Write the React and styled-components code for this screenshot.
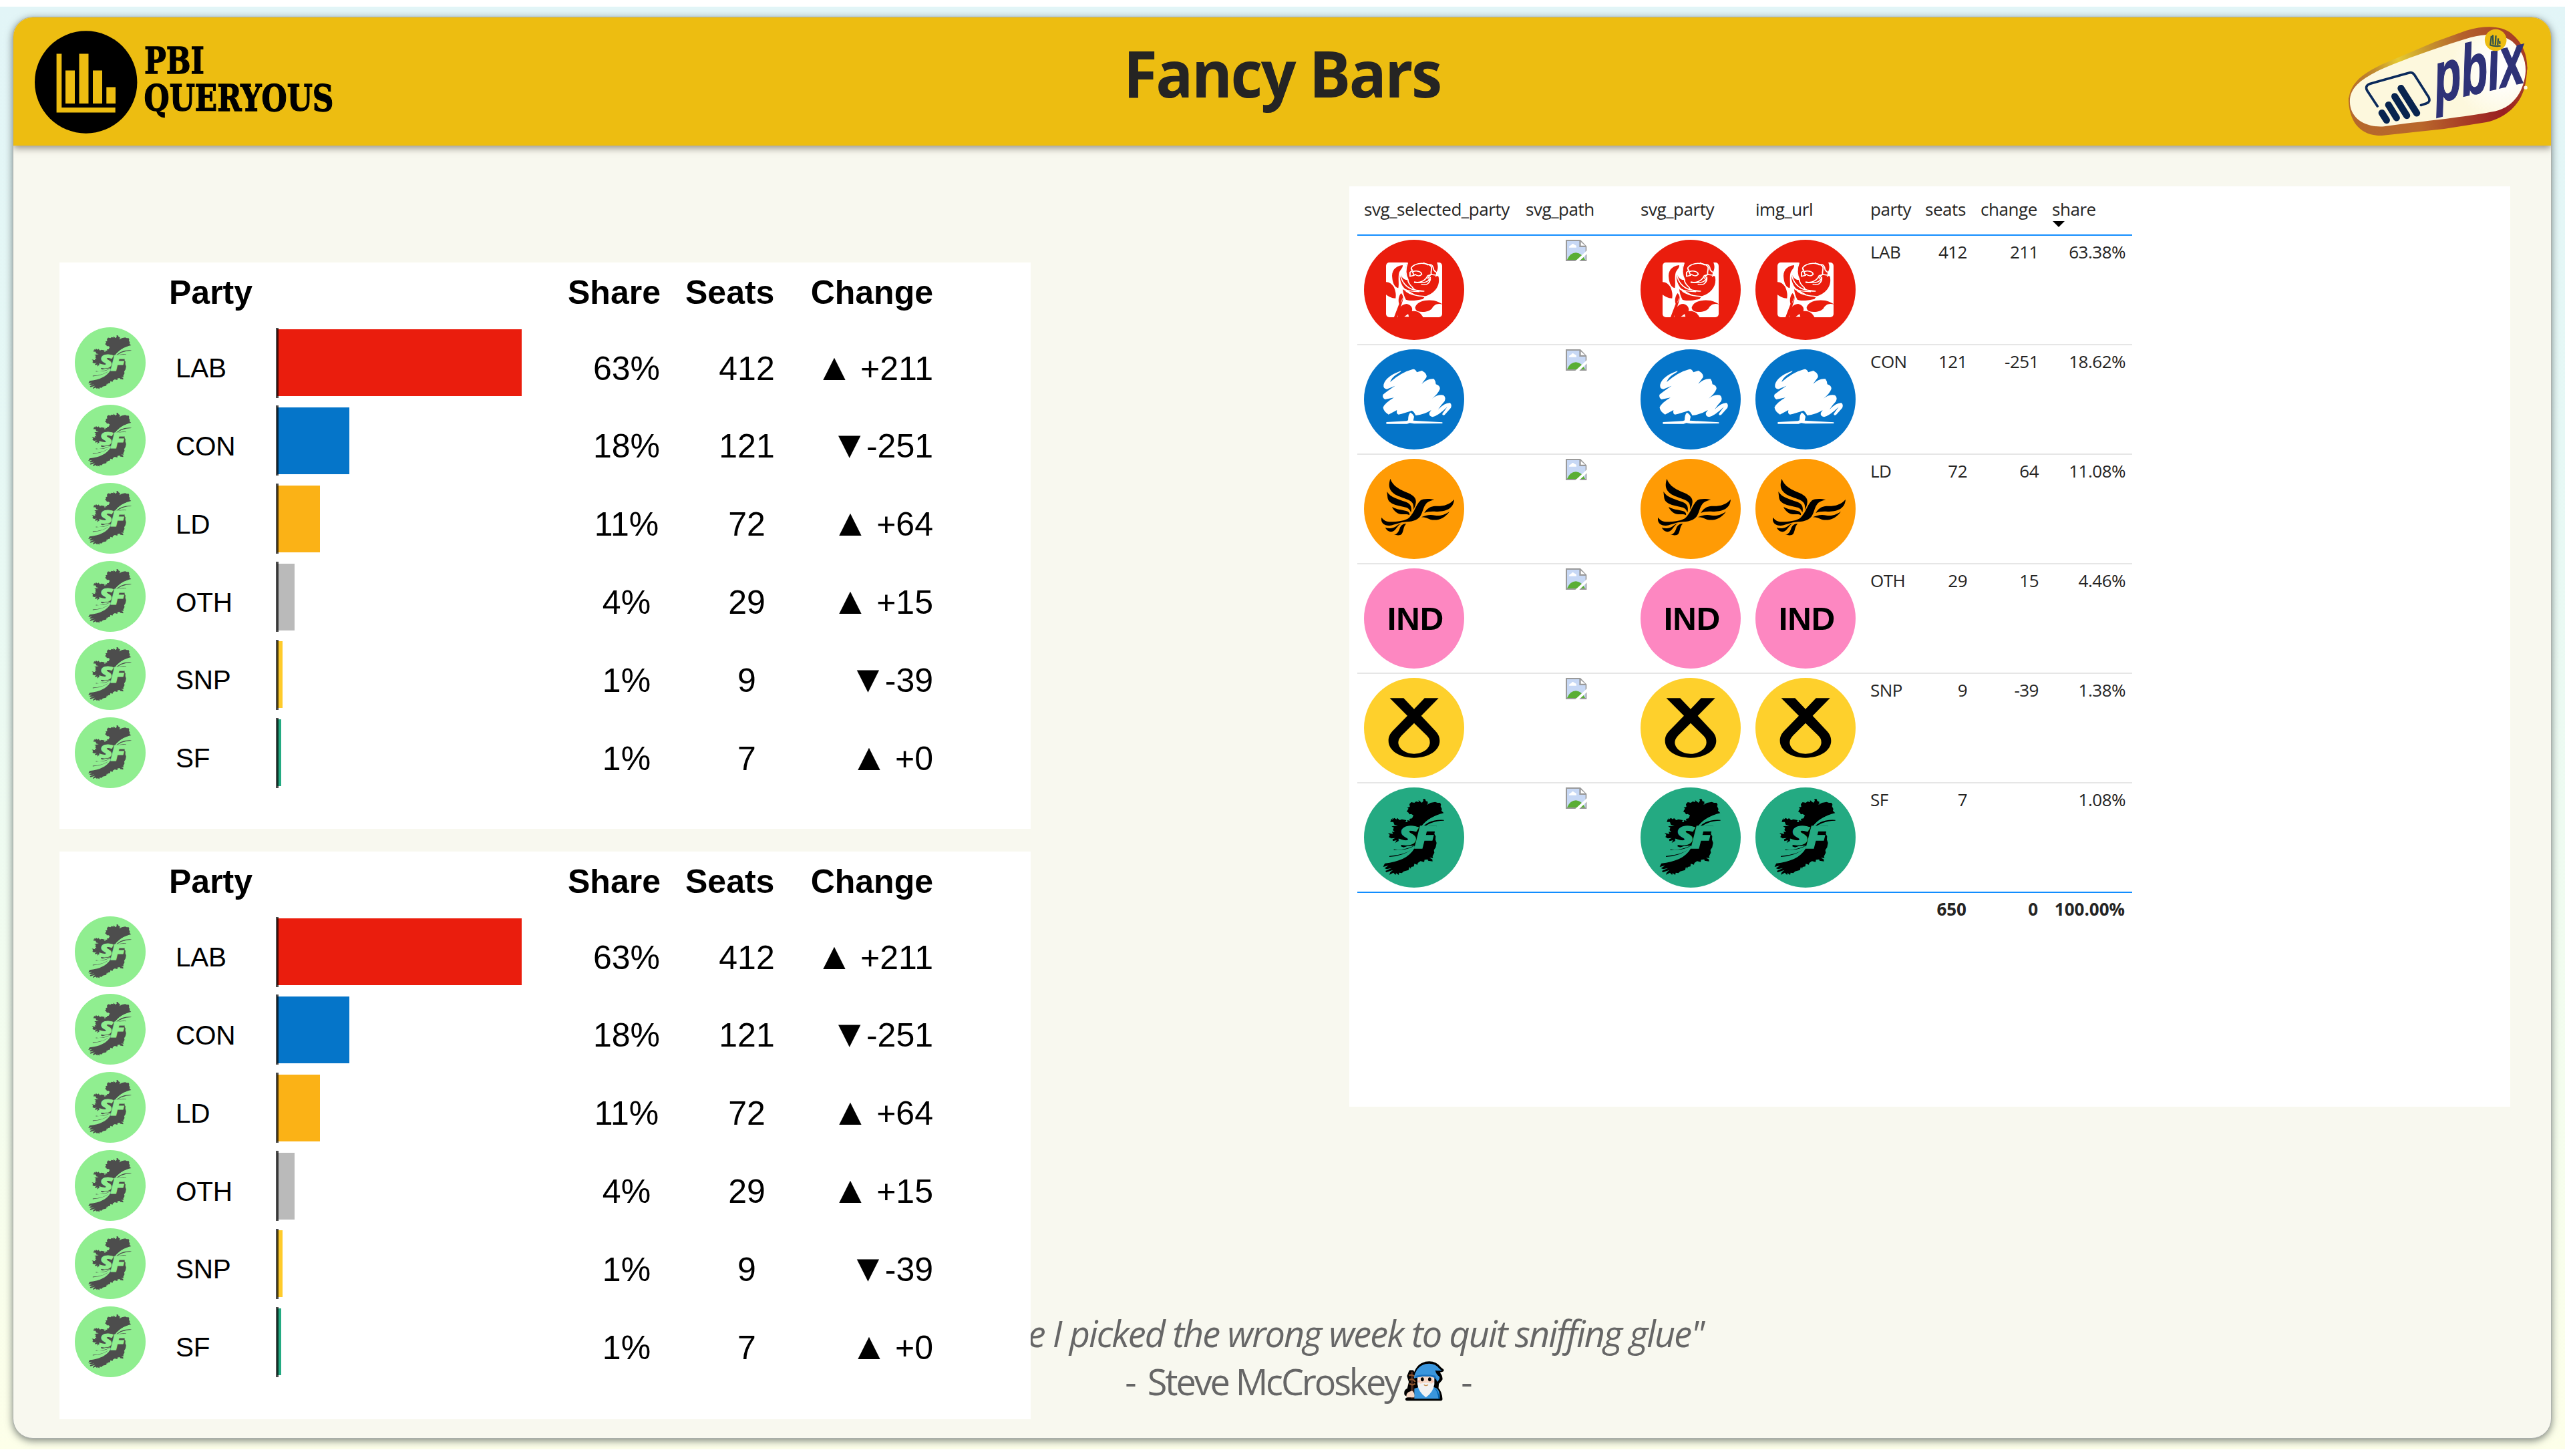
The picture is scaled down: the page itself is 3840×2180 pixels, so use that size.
import React from "react";
import styled, { createGlobalStyle, css } from "styled-components";

const Global = createGlobalStyle`
  * { box-sizing: border-box; }
  html, body { margin: 0; padding: 0; background: #fff; overflow: hidden; }
`;

const UI = `"Open Sans", "Noto Sans", sans-serif`;
const CHART = `"Liberation Sans", Arial, sans-serif`;

const Page = styled.div`
  width: 3840px;
  height: 2180px;
  padding: 10px 0;
  background: #fff;
`;
const Canvas = styled.div`
  height: 2160px;
  padding: 15px 20px 16px 19px;
  background: linear-gradient(180deg, #e2f5f7 0%, #e6f8f5 30%, #f4fdee 75%, #fdffe9 100%);
`;
const Card = styled.main`
  height: 2129px;
  display: flex;
  flex-direction: column;
  border: 1px solid #a9aeab;
  border-radius: 30px;
  background: #f8f8ef;
  box-shadow: 0 3px 12px rgba(40, 50, 50, 0.6);
  overflow: hidden;
`;
const Header = styled.header`
  flex: none;
  height: 192px;
  display: grid;
  grid-template-columns: 1fr auto 1fr;
  align-items: start;
  padding: 0 20px;
  background: #edbd11;
  box-shadow: 0 4px 10px rgba(60, 50, 40, 0.5);
`;
const Brand = styled.svg`
  display: block;
  width: 460px;
  height: 154px;
  margin: 20px 0 0 12px;
  overflow: visible;
`;
const Title = styled.h1`
  margin: 18px 0 0;
  font: 700 96px/130px ${UI};
  letter-spacing: -2.6px;
  color: #252423;
  transform: scaleX(0.968);
`;
const Badge = styled.svg`
  display: block;
  justify-self: end;
  width: 290px;
  height: 173px;
  margin-top: 9px;
  overflow: visible;
`;
const Body = styled.div`
  flex: 1;
  display: grid;
  grid-template: 1fr / 1fr;
`;
const Panels = styled.div`
  grid-area: 1 / 1;
  z-index: 1;
  display: flex;
  align-items: flex-start;
  justify-content: space-between;
  padding: 61px 61px 0 69px;
`;
const Charts = styled.div`
  display: grid;
  gap: 34px;
  padding-top: 114px;
`;

/* ---- party chart ---- */
const Chart = styled.section`
  width: 1454px;
  height: 848px;
  padding: 16px 0 0 23px;
  background: #fff;
  color: #000;
  font-family: ${CHART};

  &:last-child {
    height: 850px;
  }
`;
const chartGrid = css`
  display: grid;
  grid-template-columns: 151px 150px 408px 234px 126px 216px;
`;
const ChartHead = styled.div`
  ${chartGrid}
  height: 80.7px;
  font-size: 50px;
  font-weight: 700;
  line-height: 58px;
`;
const HeadCell = styled.span`
  grid-column: ${(p) => p.$col};
  text-align: ${(p) => p.$align || "left"};
  margin-left: ${(p) => p.$shift || 0}px;
  white-space: nowrap;
`;
const ChartRow = styled.div`
  ${chartGrid}
  height: 116.8px;
`;
const RowIcon = styled.svg`
  display: block;
  width: 106px;
  height: 106px;
`;
const Label = styled.span`
  padding-top: 38.5px;
  font-size: 40.5px;
  line-height: 46px;
  letter-spacing: -0.3px;
`;
const Track = styled.div`
  display: flex;
  align-items: center;
  height: 105px;
  margin-top: 1px;
`;
const Axis = styled.i`
  z-index: 1;
  width: 4px;
  height: 105px;
  margin-right: -2px;
  background: rgba(0, 0, 0, 0.7);
`;
const Bar = styled.i`
  height: 100px;
  background: ${(p) => p.$color};
`;
const Figure = styled.span`
  padding-top: 33px;
  font-size: 50px;
  line-height: 58px;
  text-align: ${(p) => p.$align};
  white-space: pre;
`;
const Arrow = styled.span`
  margin-right: -3px;
  font-size: 57px;
  line-height: 50px;
`;

/* ---- table ---- */
const TablePanel = styled.section`
  width: 1738px;
  height: 1378px;
  padding: 0 0 0 12px;
  background: #fff;
  font-family: ${UI};
  font-size: 26px;
  color: #252423;
`;
const tableGrid = css`
  display: grid;
  width: 1160px;
  grid-template-columns: 242px 172px 172px 172px 82px 83px 107px 130px;
`;
const THead = styled.div`
  ${tableGrid}
  height: 74px;
  border-bottom: 2px solid #118dff;
`;
const Th = styled.span`
  position: relative;
  padding: 16px 0 0 10px;
  line-height: 36px;
  letter-spacing: -0.45px;
  white-space: nowrap;
`;
const SortMark = styled.i`
  position: absolute;
  left: 11px;
  top: 52px;
  border: solid transparent;
  border-width: 9px 9px 0;
  border-top-color: #000;
`;
const TRow = styled.div`
  ${tableGrid}
  height: 164px;
  border-bottom: 2px solid ${(p) => (p.$last ? "#118dff" : "#e6e6e6")};
`;
const TotalRow = styled.div`
  ${tableGrid}
  font-weight: 700;
`;
const Cell = styled.div`
  padding: 6px 10px 0;
`;
const Value = styled(Cell)`
  grid-column: ${(p) => p.$col};
  padding-top: 6px;
  line-height: 36px;
  text-align: ${(p) => (p.$col > 5 ? "right" : "left")};
  letter-spacing: -0.5px;
`;
const TotalValue = styled(Value)`
  padding-top: 6px;
  padding-right: 11px;
  letter-spacing: 0;
`;
const Emblem = styled.svg`
  display: block;
  width: 150px;
  height: 150px;
`;
const Missing = styled.svg`
  display: block;
  width: 32px;
  height: 32px;
  margin: 0 auto;
`;

/* ---- quote ---- */
const Quote = styled.footer`
  grid-area: 1 / 1;
  align-self: end;
  display: flex;
  flex-direction: column;
  align-items: center;
  padding: 0 0 49px 50px;
  font: 400 54px/72px ${UI};
  color: #666;
`;
const Saying = styled.p`
  margin: 0;
  padding-right: 6px;
  font-style: italic;
  letter-spacing: -1.9px;
  white-space: nowrap;
`;
const Author = styled.p`
  margin: 0;
  display: flex;
  align-items: center;
  gap: 16px;
`;
const Name = styled.span`
  letter-spacing: -3.1px;
`;
const Wizard = styled.svg`
  width: 62px;
  height: 62px;
  margin: 0 9px 0 -12px;
`;

/* ---- drawings ---- */
function Ireland({ ground }) {
  return (
    <>
      <path d="M228,645 L236,632 230,628 242,624 240,612 248,603 262,606 270,600 282,603 281,594 296,606 303,597 300,590 310,588 314,598 324,602 319,609 326,606 318,616 335,606 356,602 366,606 378,606 382,614 380,622 386,634 384,642 394,652 C350,662 305,690 288,728 L284,742 350,726 354,736 352,746 358,756 357,772 362,786 358,806 350,818 352,830 344,846 346,854 330,853 343,860 344,869 324,866 322,860 308,862 306,872 290,868 278,876 276,884 262,880 260,892 248,894 246,902 240,894 236,908 214,914 206,922 194,920 192,930 180,922 178,930 168,920 150,929 154,918 166,908 136,918 132,912 160,899 138,904 128,900 146,888 122,894 126,885 130,878 C190,872 240,852 264,808 L262,798 232,800 214,806 202,802 204,792 192,788 198,780 190,778 176,786 182,774 166,778 164,770 176,764 158,766 148,760 152,750 144,742 166,746 162,736 174,738 166,728 170,718 160,712 188,708 172,704 168,692 154,692 158,680 166,674 160,684 172,674 182,680 186,674 196,684 206,680 226,684 222,692 232,692 230,684 242,686 240,678 252,676 258,662 248,656 240,658 236,650 Z" />
      <path d="M395,683 Q320,678 286,732 Q330,686 395,686Z M362,709 Q310,702 288,734 Q320,708 362,712Z M170,815 Q230,824 266,796 Q235,816 170,819Z M150,845 Q230,840 267,802 Q225,844 150,849Z" />
      <g fill="none" stroke={ground} strokeWidth="3">
        <path d="M384,660 Q318,672 286,728" strokeWidth="5" />
        <path d="M262,802 Q240,838 190,856" strokeWidth="4" />
      </g>
      <g fill={ground} stroke={ground} strokeWidth="4" fontFamily="Open Sans, Noto Sans, sans-serif" fontStyle="italic" fontWeight="800">
        <text x="191" y="796" fontSize="116" textLength="87" lengthAdjust="spacingAndGlyphs">S</text>
        <text x="262" y="811" fontSize="136" textLength="95" lengthAdjust="spacingAndGlyphs">F</text>
      </g>
    </>
  );
}

const emblems = {
  LAB: {
    box: "78 267 368 450",
    color: "#ea1d0d",
    art: (
      <>
        <rect x="159" y="369" width="206" height="246" rx="12" ry="15" fill="#fff" />
        <g fill="#ea1d0d">
          <path d="M220,381 C190,385 178,410 182,440 C184,465 192,480 204,484 C208,465 202,440 207,415 C212,400 222,392 220,381Z" />
          <path d="M238,367 L345,367 C352,385 350,402 343,416 L340,436 C344,428 350,428 352,434 C358,470 342,505 304,520 C270,526 250,500 228,487 C214,470 207,440 211,420 C218,440 228,450 240,447 L237,440 C226,415 230,385 238,367Z" />
          <path d="M220,488 C240,508 265,516 300,524 L295,533 C265,542 243,542 232,536 C225,520 222,505 220,488Z" />
          <path d="M158,457 C170,456 180,465 188,480 C195,500 196,515 194,530 C180,530 165,520 158,512Z" />
          <path d="M214,507 C205,520 203,540 207,555 L188,616 L200,616 L219,545 C224,530 222,515 214,507Z" />
          <path d="M202,616 C200,580 215,555 235,555 C252,560 258,575 254,588 C275,583 290,600 295,616Z" />
          <path d="M266,570 C275,540 310,535 335,540 C350,545 360,552 367,557 C345,550 335,560 328,575 C318,590 295,595 275,588 C268,583 266,578 266,570Z" />
        </g>
        <g fill="none" stroke="#fff" strokeWidth="4.5" strokeLinejoin="round">
          <path d="M238,370 C230,395 228,420 240,447 L214,412" />
          <path d="M211,420 C214,455 235,485 262,492 L298,498 C262,498 258,486 256,480 C246,470 238,455 240,447" />
          <path d="M222,488 C240,498 258,500 282,500 M232,498 C250,515 275,520 300,521" />
          <path d="M268,378 C250,388 248,398 256,404 L247,413 V431 L262,427 L256,411 C270,404 288,408 290,422 C282,432 272,430 264,421" />
          <path d="M268,378 C290,366 322,376 326,390 C328,402 322,410 325,422 C318,428 314,434 312,442 M262,456 C285,464 305,448 312,428 L322,424" />
          <path d="M262,459 L296,460 C312,456 320,446 322,434 M288,466 C304,474 320,466 322,440" />
          <path d="M296,370 L312,380 C330,372 332,390 334,402 C340,412 346,416 348,412 M322,422 L342,426" />
          <path d="M214,548 L220,530" strokeWidth="2" />
        </g>
        <path d="M226,613 L240,600 243,613Z" fill="#fff" />
      </>
    ),
  },
  CON: {
    box: "78 759 368 450",
    color: "#0575c9",
    art: (
      <g fill="#fff">
        <path d="M256,849 Q266,845 272,862 L291,855 Q312,870 307,886 L290,914 Q312,888 335,892 Q342,903 342,916 Q358,922 357,937 Q350,960 328,980 Q350,960 370,965 Q380,975 374,992 Q360,1010 350,1030 Q375,998 394,1000 Q402,1008 397,1022 L374,1054 Q364,1058 366,1048 L384,1018 Q350,1058 330,1063 Q316,1060 318,1045 L325,1032 Q300,1052 268,1056 Q262,1040 254,1034 Q225,1046 205,1052 Q196,1050 199,1032 L168,1052 Q150,1038 148,1020 Q155,1000 188,976 L155,984 Q144,975 148,962 Q165,945 192,923 L162,938 Q148,936 150,918 Q158,880 214,856 Q216,859 200,870 Q180,885 174,906 Q215,862 256,849 Z" />
        <path d="M240,1078 Q240,1050 249,1043 Q260,1052 262,1062 L259,1079 L366,1087 V1092 L262,1093 L246,1090 L236,1094 H160 V1086 L234,1081Z" />
      </g>
    ),
  },
  LD: {
    box: "36 21 450 450",
    color: "#ff9b05",
    art: (
      <>
        <path d="M352,204 C330,199 300,199 290,208 C270,226 262,262 240,284 C225,298 190,304 150,304 C130,302 120,292 115,284 C110,304 122,322 150,321 C180,316 195,306 215,305 C250,304 275,298 288,280 C300,262 302,235 318,219 C328,210 340,209 352,204Z" />
        <path d="M154,110 C165,145 200,160 235,175 C262,188 271,200 269,217 C268,232 262,240 258,250 C260,232 258,220 245,211 C215,192 160,190 150,148 C148,135 150,125 154,110Z" />
        <path d="M139,168 C155,195 190,202 222,214 C247,224 252,238 247,262 C240,246 235,241 215,237 C180,230 145,222 142,195 Z" />
        <path d="M162,237 C180,248 205,250 225,255 C238,258 242,265 240,274 C232,268 222,270 205,270 C185,268 170,255 162,237Z" />
        <path d="M441,203 C420,228 390,235 355,233 C330,236 318,245 307,264 C320,258 340,256 360,258 C395,258 438,250 441,203Z" />
        <path d="M420,258 C395,275 375,278 355,275 C330,270 312,275 294,283 C310,283 320,288 335,294 C365,300 395,292 420,258Z" />
        <path d="M203,311 C190,313 178,330 160,332 C148,334 138,332 131,330 C140,345 150,350 162,348 C180,344 183,322 203,311Z" />
        <path d="M226,312 C210,312 200,322 196,335 C190,350 185,360 170,361 C185,366 200,366 206,358 C216,340 212,325 226,312Z" />
      </>
    ),
  },
  OTH: {
    box: "36 513 450 450",
    color: "#fd87c1",
    art: (
      <text x="267" y="789" textAnchor="middle" fontFamily="Liberation Sans, Arial, sans-serif" fontWeight="700" fontSize="147" textLength="254" lengthAdjust="spacingAndGlyphs">
        IND
      </text>
    ),
  },
  SNP: {
    box: "36 45 450 450",
    color: "#fed02c",
    art: (
      <path
        fillRule="evenodd"
        d="M152,136 L214,136 L261,185 L308,136 L371,136 L293,215 L355,281 C370,297 376,310 376,328 C376,372 325,404 261,404 C197,404 146,372 146,328 C146,310 152,296 168,280 L231,215 Z M261,248 L205,304 C194,316 190,326 190,336 C192,366 226,386 261,386 C296,386 330,366 332,336 C332,322 328,314 318,304 Z"
      />
    ),
  },
  SF: { box: "36 537 450 450", color: "#24aa82", art: <Ireland ground="#24aa82" /> },
};

function PartyEmblem({ code }) {
  const { box, color, art } = emblems[code];
  const [x, y, w, h] = box.split(" ").map(Number);
  return (
    <Emblem viewBox={box} preserveAspectRatio="none">
      <ellipse cx={x + w / 2} cy={y + h / 2} rx={w / 2} ry={h / 2} fill={color} />
      {art}
    </Emblem>
  );
}

function MissingImage() {
  return (
    <Missing viewBox="942 45 96 96">
      <path d="M942,45 H1008 L1036,74 V141 H942Z" fill="#9a9a9a" />
      <path d="M948,51 H1003 V78 H1031 V135 H948Z" fill="#c7d8f5" />
      <path d="M1010,55 V71 H1029Z" fill="#fff" />
      <path d="M957,80 Q957,71 966,70 Q972,58 980,67 Q992,70 990,80Z" fill="#fff" />
      <path d="M948,135 Q962,103 988,103 Q1014,105 1029,135Z" fill="#5aae35" />
      <path d="M984,142 L1038,92 V108 L1002,142Z" fill="#fff" />
    </Missing>
  );
}

function BrandLogo() {
  return (
    <Brand viewBox="52 45.5 460 154">
      <circle cx="128.7" cy="122.5" r="76.7" />
      <path
        fill="#edbd11"
        d="M84.6,80 H92.3 V160.5 H172.7 V168 H84.6Z M98,105 H112 V154.5 H98Z M118.5,80 H132.5 V154.5 H118.5Z M139,105 H153 V154.5 H139Z M159.3,130 H173 V154.5 H159.3Z"
      />
      <g fontFamily="DejaVu Serif, serif" fontWeight="700" fontSize="55" stroke="#000" strokeWidth="1.4">
        <text x="216" y="109.5" textLength="90" lengthAdjust="spacingAndGlyphs">PBI</text>
        <text x="215.5" y="165" textLength="284" lengthAdjust="spacingAndGlyphs">QUERYOUS</text>
      </g>
    </Brand>
  );
}

function PbixLogo() {
  return (
    <Badge viewBox="150 105 870 520">
      <defs>
        <linearGradient id="rimTop" gradientUnits="userSpaceOnUse" x1="200" y1="400" x2="960" y2="200">
          <stop offset="0" stopColor="#b8702c" />
          <stop offset="0.13" stopColor="#c08a2e" />
          <stop offset="0.28" stopColor="#e5c932" />
          <stop offset="0.45" stopColor="#c8982e" />
          <stop offset="0.65" stopColor="#b5642c" />
          <stop offset="1" stopColor="#a53a25" />
        </linearGradient>
        <linearGradient id="rimBottom" gradientUnits="userSpaceOnUse" x1="180" y1="560" x2="960" y2="480">
          <stop offset="0" stopColor="#b5682c" />
          <stop offset="0.4" stopColor="#b9672b" />
          <stop offset="0.65" stopColor="#a83e26" />
          <stop offset="0.88" stopColor="#991d22" />
          <stop offset="1" stopColor="#a53a25" />
        </linearGradient>
        <radialGradient id="plate" gradientUnits="userSpaceOnUse" cx="860" cy="310" r="230">
          <stop offset="0" stopColor="#ffffff" />
          <stop offset="0.35" stopColor="#fffefa" />
          <stop offset="1" stopColor="#fdf8dd" />
        </radialGradient>
      </defs>
      <path fill="url(#rimTop)" d="M170,460 C172,370 240,328 320,290 L560,188 L700,137 C790,112 860,116 905,152 C955,192 975,250 974,310 L960,400 Z" />
      <path fill="url(#rimBottom)" d="M170,440 C170,550 225,612 320,610 L600,580 L790,550 C880,530 940,470 960,400 Q972,360 974,300Z" />
      <path fill="url(#plate)" d="M176,460 C174,395 225,358 300,320 C370,286 560,215 720,168 C800,148 860,152 905,185 C950,225 968,270 967,320 C962,400 920,480 830,500 C720,522 560,540 430,555 L330,569 C240,575 178,530 176,460Z" />
      <path
        d="M300,478 L254,408 Q242,386 266,377 L440,328 Q456,322 466,336 L531,438 Q540,458 521,465 L496,473"
        fill="none"
        stroke="#0b2a5b"
        strokeWidth="11"
        strokeLinecap="round"
        strokeLinejoin="round"
      />
      <path d="M320,508 L341,541 M350,472 L386,530 M378,434 L432,520 M406,397 L477,509" stroke="#08244f" strokeWidth="31" strokeLinecap="round" />
      <text
        transform="translate(565 462) rotate(-13) skewX(-8) scale(.63 1)"
        fontFamily="Liberation Sans, Arial, sans-serif"
        fontWeight="700"
        fontStyle="italic"
        fontSize="318"
        fill="#2e3277"
        stroke="#2e3277"
        strokeWidth="5"
      >
        pbix
      </text>
      <circle cx="832" cy="180" r="49" fill="#edbd11" />
      <path d="M808,202 L813,162 M821,200 L819,157 M831,202 L833,160 M841,202 L844,172 M851,198 L850,184 M806,202 Q830,210 854,206" stroke="#33534a" strokeWidth="7" fill="none" />
      <circle cx="967" cy="394" r="8" fill="#fff8dc" />
    </Badge>
  );
}

function WizardFigure() {
  return (
    <Wizard viewBox="66 54 186 186">
      <path
        d="M104,218 L80,206 Q76,190 92,184 L100,150 L92,124 L100,104 L110,104 L118,128 Q128,76 168,66 Q210,58 232,88 L244,98 L222,104 Q240,124 238,138 L222,156 L220,180 Q236,196 238,228 L84,228Z"
        stroke="#000"
        strokeWidth="13"
        strokeLinejoin="round"
      />
      <path d="M118,226 V180 L138,174 H205 Q236,180 232,226Z" fill="#3a96dd" />
      <path d="M205,176 Q228,184 232,226 H226 Q224,190 205,176Z" fill="#0063b1" />
      <path d="M102,104 L112,104 L116,224 H102Z" fill="#45261d" />
      <path d="M94,122 Q104,114 122,126 M96,142 Q112,132 122,150 M96,158 Q110,168 122,158" fill="none" stroke="#8e562e" strokeWidth="7" />
      <path d="M84,220 Q78,206 92,196 L108,190 Q122,200 118,220Z" fill="#f7d7c4" />
      <path d="M132,128 V160 Q136,196 170,220 Q204,196 208,160 V128Z" fill="#f2f2f2" />
      <path d="M134,126 H206 L198,158 H144Z" fill="#f7d7c4" />
      <circle cx="139" cy="148" r="6" fill="#f5bfae" />
      <circle cx="200" cy="148" r="6" fill="#f5bfae" />
      <ellipse cx="154" cy="139" rx="7" ry="9" />
      <ellipse cx="187" cy="139" rx="7" ry="9" />
      <path d="M144,160 Q170,148 198,160 V176 H144Z" fill="#f2f2f2" />
      <path d="M161,163 Q170,171 180,163" fill="none" stroke="#c98f4e" strokeWidth="4" />
      <path d="M116,134 Q124,82 168,70 Q208,62 230,90 Q238,98 242,98 Q228,102 212,98 Q216,116 230,126 Q236,134 222,150 Q214,132 200,128 Q168,120 134,130 Q124,134 116,134Z" fill="#3a96dd" />
      <path d="M124,122 Q170,114 212,122 L222,146 Q212,130 196,127 Q164,120 122,132Z" fill="#1870bd" />
    </Wizard>
  );
}

/* ---- data ---- */
const parties = [
  { code: "LAB", pct: "63%", seats: "412", arrow: "▲", delta: " +211", color: "#ea1d0d", change: "211", share: "63.38%" },
  { code: "CON", pct: "18%", seats: "121", arrow: "▼", delta: "-251", color: "#0575c9", change: "-251", share: "18.62%" },
  { code: "LD", pct: "11%", seats: "72", arrow: "▲", delta: " +64", color: "#fbb216", change: "64", share: "11.08%" },
  { code: "OTH", pct: "4%", seats: "29", arrow: "▲", delta: " +15", color: "#bababa", change: "15", share: "4.46%" },
  { code: "SNP", pct: "1%", seats: "9", arrow: "▼", delta: "-39", color: "#ffcb2b", change: "-39", share: "1.38%" },
  { code: "SF", pct: "1%", seats: "7", arrow: "▲", delta: " +0", color: "#24aa82", change: "", share: "1.08%" },
];

function SeatChart() {
  return (
    <Chart>
      <ChartHead>
        <HeadCell $col="1" $shift={141}>Party</HeadCell>
        <HeadCell $col="4" $shift={29}>Share</HeadCell>
        <HeadCell $col="5" $shift={-29}>Seats</HeadCell>
        <HeadCell $col="6" $align="right">Change</HeadCell>
      </ChartHead>
      {parties.map((p) => (
        <ChartRow key={p.code}>
          <RowIcon viewBox="36 537 450 450">
            <circle cx="261" cy="762" r="225" fill="#90ee90" />
            <g fill="#4d4d4d">
              <Ireland ground="#90ee90" />
            </g>
          </RowIcon>
          <Label>{p.code}</Label>
          <Track>
            <Axis />
            <Bar $color={p.color} style={{ width: `${parseFloat(p.share) * 5.775}px` }} />
          </Track>
          <Figure $align="center">{p.pct}</Figure>
          <Figure $align="center">{p.seats}</Figure>
          <Figure $align="right">
            <Arrow>{p.arrow}</Arrow>
            {p.delta}
          </Figure>
        </ChartRow>
      ))}
    </Chart>
  );
}

function PartyTable() {
  return (
    <TablePanel>
      <THead>
        <Th>svg_selected_party</Th>
        <Th>svg_path</Th>
        <Th>svg_party</Th>
        <Th>img_url</Th>
        <Th>party</Th>
        <Th>seats</Th>
        <Th>change</Th>
        <Th>
          share
          <SortMark />
        </Th>
      </THead>
      {parties.map((p, i) => (
        <TRow key={p.code} $last={i === parties.length - 1}>
          <Cell><PartyEmblem code={p.code} /></Cell>
          <Cell><MissingImage /></Cell>
          <Cell><PartyEmblem code={p.code} /></Cell>
          <Cell><PartyEmblem code={p.code} /></Cell>
          <Value $col={5}>{p.code}</Value>
          <Value $col={6}>{p.seats}</Value>
          <Value $col={7}>{p.change}</Value>
          <Value $col={8}>{p.share}</Value>
        </TRow>
      ))}
      <TotalRow>
        <TotalValue $col={6}>650</TotalValue>
        <TotalValue $col={7}>0</TotalValue>
        <TotalValue $col={8}>100.00%</TotalValue>
      </TotalRow>
    </TablePanel>
  );
}

export default function App() {
  return (
    <Page>
      <Global />
      <Canvas>
        <Card>
          <Header>
            <BrandLogo />
            <Title>Fancy Bars</Title>
            <PbixLogo />
          </Header>
          <Body>
            <Panels>
              <Charts>
                <SeatChart />
                <SeatChart />
              </Charts>
              <PartyTable />
            </Panels>
            <Quote>
              <Saying>"Looks like I picked the wrong week to quit sniffing glue"</Saying>
              <Author>
                <span>-</span>
                <Name>Steve McCroskey</Name>
                <WizardFigure />
                <span>-</span>
              </Author>
            </Quote>
          </Body>
        </Card>
      </Canvas>
    </Page>
  );
}
